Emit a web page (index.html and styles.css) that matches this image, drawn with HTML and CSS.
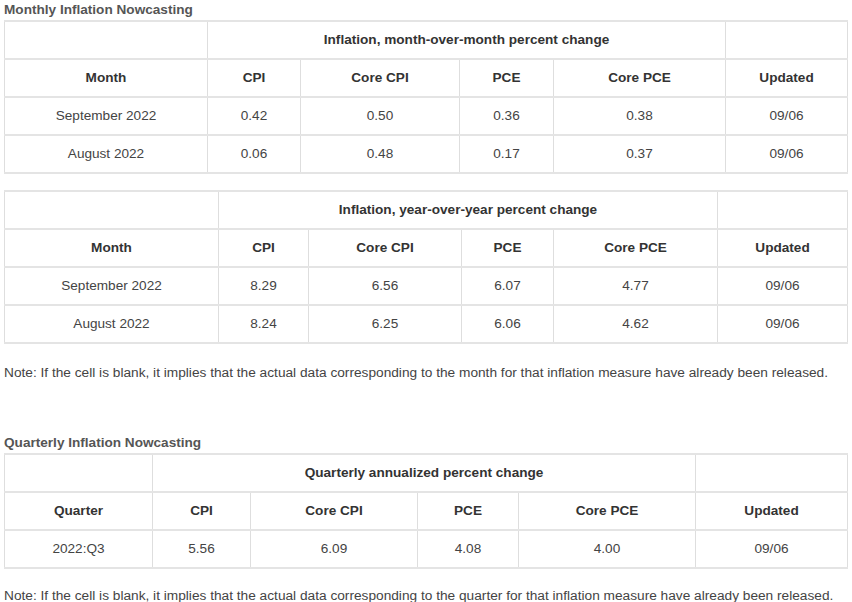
FILE: index.html
```html
<!DOCTYPE html>
<html>
<head>
<meta charset="utf-8">
<link rel="stylesheet" href="styles.css">
</head>
<body>
<h3 class="title">Monthly Inflation Nowcasting</h3>
<table class="nc t1">
  <colgroup><col style="width:203px"><col style="width:93px"><col style="width:159px"><col style="width:94px"><col style="width:172px"><col></colgroup>
  <tr><th></th><th colspan="4">Inflation, month-over-month percent change</th><th></th></tr>
  <tr><th>Month</th><th>CPI</th><th>Core CPI</th><th>PCE</th><th>Core PCE</th><th>Updated</th></tr>
  <tr><td>September 2022</td><td>0.42</td><td>0.50</td><td>0.36</td><td>0.38</td><td>09/06</td></tr>
  <tr><td>August 2022</td><td>0.06</td><td>0.48</td><td>0.17</td><td>0.37</td><td>09/06</td></tr>
</table>
<table class="nc t2">
  <colgroup><col style="width:214px"><col style="width:90px"><col style="width:153px"><col style="width:92px"><col style="width:164px"><col></colgroup>
  <tr><th></th><th colspan="4">Inflation, year-over-year percent change</th><th></th></tr>
  <tr><th>Month</th><th>CPI</th><th>Core CPI</th><th>PCE</th><th>Core PCE</th><th>Updated</th></tr>
  <tr><td>September 2022</td><td>8.29</td><td>6.56</td><td>6.07</td><td>4.77</td><td>09/06</td></tr>
  <tr><td>August 2022</td><td>8.24</td><td>6.25</td><td>6.06</td><td>4.62</td><td>09/06</td></tr>
</table>
<p class="note">Note: If the cell is blank, it implies that the actual data corresponding to the month for that inflation measure have already been released.</p>
<h3 class="title t3title">Quarterly Inflation Nowcasting</h3>
<table class="nc t3">
  <colgroup><col style="width:148px"><col style="width:98px"><col style="width:167px"><col style="width:101px"><col style="width:177px"><col></colgroup>
  <tr><th></th><th colspan="4">Quarterly annualized percent change</th><th></th></tr>
  <tr><th>Quarter</th><th>CPI</th><th>Core CPI</th><th>PCE</th><th>Core PCE</th><th>Updated</th></tr>
  <tr><td>2022:Q3</td><td>5.56</td><td>6.09</td><td>4.08</td><td>4.00</td><td>09/06</td></tr>
</table>
<p class="note note2">Note: If the cell is blank, it implies that the actual data corresponding to the quarter for that inflation measure have already been released.</p>
</body>
</html>
```
FILE: styles.css
```css
html, body {
  margin: 0;
  padding: 0;
  background: #fff;
}
body {
  padding: 0 4px;
  font-family: "Liberation Sans", Arial, sans-serif;
  color: #333;
}
.title {
  margin: 0;
  font-size: 13.6px;
  line-height: 20px;
  font-weight: bold;
  color: #555;
}
.nc {
  width: 844px;
  border-collapse: collapse;
  table-layout: fixed;
  font-size: 13.6px;
  margin-bottom: 16px;
}
.nc th, .nc td {
  text-align: center;
  padding: 0;
  height: 36px;
  line-height: 20px;
  border-left: 1px solid #dedede;
  border-right: 1px solid #dedede;
  border-top: 2px solid #e4e4e4;
  border-bottom: 2px solid #e4e4e4;
}
.nc th {
  font-weight: bold;
  color: #333;
}
.nc td {
  color: #444;
}
.note {
  margin: 0;
  font-size: 13.7px;
  line-height: 20px;
  color: #444;
}
.t2 {
  margin-bottom: 19px;
}
.t3title {
  margin-top: 50px;
  margin-bottom: 0;
}
.note2 {
  margin-top: 17px;
}
```
